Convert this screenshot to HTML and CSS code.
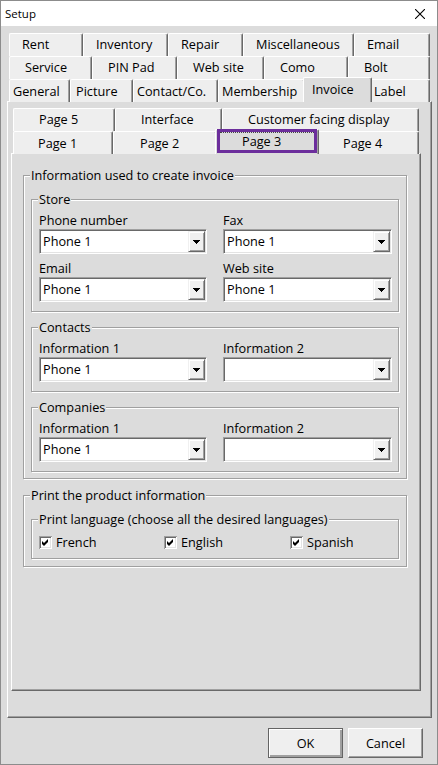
FILE: index.html
```html
<!DOCTYPE html>
<html lang="en">
<head>
<meta charset="utf-8">
<title>Setup</title>
<link rel="stylesheet" href="styles.css">
</head>
<body>
<div class="window">
  <header class="titlebar">
    <span class="title">Setup</span>
    <span class="close"><svg width="10" height="10" viewBox="0 0 10 10"><path d="M0 0L10 10M10 0L0 10" stroke="#000" stroke-width="1.1"/></svg></span>
  </header>
  <main class="dialog">
    <div class="tabset outer">
      <div class="tabrows">
        <div class="tabrow r1">
          <div class="tab t-rent">Rent</div>
          <div class="tab t-inventory">Inventory</div>
          <div class="tab t-repair">Repair</div>
          <div class="tab t-misc">Miscellaneous</div>
          <div class="tab t-email">Email</div>
        </div>
        <div class="tabrow r2">
          <div class="tab t-service">Service</div>
          <div class="tab t-pinpad">PIN Pad</div>
          <div class="tab t-website">Web site</div>
          <div class="tab t-como">Como</div>
          <div class="tab t-bolt">Bolt</div>
        </div>
        <div class="tabrow front r3">
          <div class="tab t-general">General</div>
          <div class="tab t-picture">Picture</div>
          <div class="tab t-contact">Contact/Co.</div>
          <div class="tab t-membership">Membership</div>
          <div class="tab selected t-invoice">Invoice</div>
          <div class="tab t-label">Label</div>
        </div>
      </div>
      <div class="panel outer-panel">
        <div class="tabset inner">
          <div class="tabrows">
            <div class="tabrow ra">
              <div class="tab t-page5">Page 5</div>
              <div class="tab t-interface">Interface</div>
              <div class="tab t-customer">Customer facing display</div>
            </div>
            <div class="tabrow front rb">
              <div class="tab t-page1">Page 1</div>
              <div class="tab t-page2">Page 2</div>
              <div class="tab selected t-page3">Page 3<span class="focus"></span><span class="highlight"></span></div>
              <div class="tab t-page4">Page 4</div>
            </div>
          </div>
          <div class="panel inner-panel">
            <fieldset class="group main">
              <legend>Information used to create invoice</legend>
              <fieldset class="group sub">
                <legend>Store</legend>
                <div class="fields">
                  <div class="field">
                    <label>Phone number</label>
                    <div class="combo"><span class="value">Phone 1</span><span class="drop"><svg width="7" height="4" viewBox="0 0 7 4"><path d="M0 0h7v1h-1v1h-1v1h-1v1h-1v-1h-1v-1h-1v-1h-1z" fill="#000"/></svg></span></div>
                  </div>
                  <div class="field">
                    <label>Fax</label>
                    <div class="combo"><span class="value">Phone 1</span><span class="drop"><svg width="7" height="4" viewBox="0 0 7 4"><path d="M0 0h7v1h-1v1h-1v1h-1v1h-1v-1h-1v-1h-1v-1h-1z" fill="#000"/></svg></span></div>
                  </div>
                  <div class="field">
                    <label>Email</label>
                    <div class="combo"><span class="value">Phone 1</span><span class="drop"><svg width="7" height="4" viewBox="0 0 7 4"><path d="M0 0h7v1h-1v1h-1v1h-1v1h-1v-1h-1v-1h-1v-1h-1z" fill="#000"/></svg></span></div>
                  </div>
                  <div class="field">
                    <label>Web site</label>
                    <div class="combo"><span class="value">Phone 1</span><span class="drop"><svg width="7" height="4" viewBox="0 0 7 4"><path d="M0 0h7v1h-1v1h-1v1h-1v1h-1v-1h-1v-1h-1v-1h-1z" fill="#000"/></svg></span></div>
                  </div>
                </div>
              </fieldset>
              <fieldset class="group sub">
                <legend>Contacts</legend>
                <div class="fields">
                  <div class="field">
                    <label>Information 1</label>
                    <div class="combo"><span class="value">Phone 1</span><span class="drop"><svg width="7" height="4" viewBox="0 0 7 4"><path d="M0 0h7v1h-1v1h-1v1h-1v1h-1v-1h-1v-1h-1v-1h-1z" fill="#000"/></svg></span></div>
                  </div>
                  <div class="field">
                    <label>Information 2</label>
                    <div class="combo"><span class="value"></span><span class="drop"><svg width="7" height="4" viewBox="0 0 7 4"><path d="M0 0h7v1h-1v1h-1v1h-1v1h-1v-1h-1v-1h-1v-1h-1z" fill="#000"/></svg></span></div>
                  </div>
                </div>
              </fieldset>
              <fieldset class="group sub">
                <legend>Companies</legend>
                <div class="fields">
                  <div class="field">
                    <label>Information 1</label>
                    <div class="combo"><span class="value">Phone 1</span><span class="drop"><svg width="7" height="4" viewBox="0 0 7 4"><path d="M0 0h7v1h-1v1h-1v1h-1v1h-1v-1h-1v-1h-1v-1h-1z" fill="#000"/></svg></span></div>
                  </div>
                  <div class="field">
                    <label>Information 2</label>
                    <div class="combo"><span class="value"></span><span class="drop"><svg width="7" height="4" viewBox="0 0 7 4"><path d="M0 0h7v1h-1v1h-1v1h-1v1h-1v-1h-1v-1h-1v-1h-1z" fill="#000"/></svg></span></div>
                  </div>
                </div>
              </fieldset>
            </fieldset>
            <fieldset class="group main print">
              <legend>Print the product information</legend>
              <fieldset class="group sub lang">
                <legend>Print language (choose all the desired languages)</legend>
                <div class="checks">
                  <label class="check"><svg width="13" height="13" viewBox="0 0 13 13"><rect width="13" height="13" fill="#fff"/><path d="M0 0.5H13M0.5 0V13" stroke="#a0a0a0"/><path d="M1 1.5H12M1.5 1V12" stroke="#696969"/><path d="M2 11.5H12M11.5 2V12" stroke="#e3e3e3"/><path d="M3 5L5 7L9 3V6L5 10L3 8Z" fill="#000"/></svg>French</label>
                  <label class="check"><svg width="13" height="13" viewBox="0 0 13 13"><rect width="13" height="13" fill="#fff"/><path d="M0 0.5H13M0.5 0V13" stroke="#a0a0a0"/><path d="M1 1.5H12M1.5 1V12" stroke="#696969"/><path d="M2 11.5H12M11.5 2V12" stroke="#e3e3e3"/><path d="M3 5L5 7L9 3V6L5 10L3 8Z" fill="#000"/></svg>English</label>
                  <label class="check"><svg width="13" height="13" viewBox="0 0 13 13"><rect width="13" height="13" fill="#fff"/><path d="M0 0.5H13M0.5 0V13" stroke="#a0a0a0"/><path d="M1 1.5H12M1.5 1V12" stroke="#696969"/><path d="M2 11.5H12M11.5 2V12" stroke="#e3e3e3"/><path d="M3 5L5 7L9 3V6L5 10L3 8Z" fill="#000"/></svg>Spanish</label>
                </div>
              </fieldset>
            </fieldset>
          </div>
        </div>
      </div>
    </div>
    <div class="buttons">
      <button class="btn default">OK</button>
      <button class="btn">Cancel</button>
    </div>
  </main>
</div>
</body>
</html>
```
FILE: styles.css
```css
* { box-sizing: border-box; }
html, body { margin: 0; padding: 0; }
body {
  width: 438px;
  height: 765px;
  overflow: hidden;
  background: #dcdcdc;
  font-family: "Open Sans", "Noto Sans", sans-serif;
  font-size: 12.7px;
  color: #000;
}
.window {
  width: 438px;
  height: 765px;
  border: 1px solid #8c8c8c;
  background: #dcdcdc;
  display: flex;
  flex-direction: column;
}
.titlebar {
  flex: none;
  height: 25px;
  background: #fff;
  display: flex;
  align-items: center;
  justify-content: space-between;
  padding-left: 4px;
}
.title { font-size: 11.5px; line-height: 25px; }
.close {
  width: 34px;
  height: 25px;
  display: flex;
  align-items: center;
  justify-content: center;
  padding-top: 1px;
}
.dialog {
  flex: 1;
  display: flex;
  flex-direction: column;
  padding: 7px 0 0 6px;
}
.tabset.outer { width: 425px; }
.tabrows { display: flex; flex-direction: column; padding: 0 2px; }
.tabrow { display: flex; height: 23px; }
.tabrow.front { height: 22px; }
.tab {
  flex: none;
  height: 23px;
  background: #eeeeee;
  border-top: 1px solid #fff;
  border-left: 1px solid #fff;
  border-right: 1px solid #696969;
  box-shadow: inset -1px 0 #a0a0a0;
  border-radius: 2px 2px 0 0;
  white-space: nowrap;
  line-height: 21px;
}
.tabrow.front .tab { padding-top: 1px; }
.tab.selected {
  position: relative;
  z-index: 1;
  height: 25px;
  background: #dcdcdc;
  margin: -2px -2px 0 -2px;
}
.r1 .tab { padding-left: 12px; }
.r2 .tab { padding-left: 15px; }
.r3 .tab { padding-left: 3px; }
.r3 .t-picture { padding-left: 5px; }
.r3 .t-invoice { padding-left: 8px; }
.ra .tab { padding-left: 25px; }
.rb .tab { padding-left: 24px; }
.rb .t-page2, .rb .t-page3 { padding-left: 26px; }
.rb .t-page4 { padding-left: 25px; }

.t-rent { width: 74px; }
.t-inventory { width: 85px; }
.t-repair { width: 75px; }
.t-misc { width: 111px; }
.t-email { width: 76px; }
.t-service { width: 83px; }
.t-pinpad { width: 85px; }
.t-website { width: 87px; }
.t-como { width: 84px; }
.t-bolt { width: 82px; }
.t-general { width: 61px; }
.t-picture { width: 63px; }
.t-contact { width: 85px; }
.t-membership { width: 87px; }
.t-invoice { width: 69px; }
.t-label { width: 60px; }
.t-page5 { width: 102px; }
.t-interface { width: 107px; }
.t-customer { width: 197px; }
.t-page1 { width: 100px; }
.t-page2 { width: 104px; }
.t-page3 { width: 104px; }
.t-page4 { width: 102px; }

.focus {
  position: absolute;
  left: 4px;
  right: 4px;
  top: 2px;
  border-top: 1px dotted #444;
}
.highlight {
  position: absolute;
  left: 1px;
  right: 1px;
  top: -1px;
  bottom: 1px;
  border: 3px solid #6c2e9c;
}

.panel {
  background: #dcdcdc;
  border-top: 1px solid #fff;
  border-left: 1px solid #fff;
  border-right: 1px solid #696969;
  border-bottom: 1px solid #696969;
  box-shadow: inset -1px -1px #a0a0a0;
}
.outer-panel {
  height: 617px;
  padding: 6px 10px 0 3px;
}
.inner-panel {
  height: 538px;
  padding: 12px 13px 0 11px;
}

.group {
  margin: 0;
  min-width: 0;
  border: 1px solid #a0a0a0;
  box-shadow: inset 1px 1px 0 #fff, 1px 1px 0 #fff;
}
.group legend {
  padding: 0 1px;
  margin-left: -1px;
  line-height: 18px;
  background: #dcdcdc;
}
.group.main { padding: 6px 7px 6px 7px; }
.group.print { margin-top: 7px; padding-bottom: 7px; }
.group.sub { padding: 4px 5px 9px 7px; }
.group.sub + .group.sub { margin-top: 6px; }
.group.lang { padding: 6px 5px 8px 7px; }

.fields {
  display: grid;
  grid-template-columns: 168px 169px;
  column-gap: 16px;
  row-gap: 6px;
}
.field label { display: block; line-height: 17px; }
.combo {
  height: 25px;
  display: flex;
  background: #fff;
  border: 1px solid;
  border-color: #a0a0a0 #fff #fff #a0a0a0;
  box-shadow: inset 1px 1px #696969, inset -1px -1px #e3e3e3;
  padding: 1px;
}
.combo .value {
  flex: 1;
  padding-left: 2px;
  line-height: 21px;
}
.combo .drop {
  flex: none;
  width: 17px;
  height: 21px;
  background: #f0f0f0;
  border-top: 1px solid #f0f0f0;
  border-left: 1px solid #f0f0f0;
  border-right: 1px solid #696969;
  border-bottom: 1px solid #696969;
  box-shadow: inset 1px 1px #fff, inset -1px -1px #a0a0a0;
  display: flex;
  align-items: center;
  justify-content: center;
}
.checks {
  display: grid;
  grid-template-columns: 125px 126px auto;
  height: 16px;
  align-items: center;
}
.check {
  display: flex;
  align-items: center;
  gap: 4px;
  line-height: 16px;
}
.check svg { flex: none; }

.buttons {
  display: flex;
  justify-content: flex-end;
  gap: 5px;
  margin-top: 10px;
  padding-right: 14px;
}
.btn {
  font: inherit;
  color: #000;
  width: 75px;
  height: 30px;
  margin: 0;
  padding: 0;
  background: #efefef;
  border: 1px solid;
  border-color: #fff #696969 #696969 #fff;
  box-shadow: inset -1px -1px #a0a0a0;
}
.btn.default {
  border-color: #646464;
  box-shadow: inset 1px 1px #fff, inset -2px -2px #a0a0a0;
}
```
